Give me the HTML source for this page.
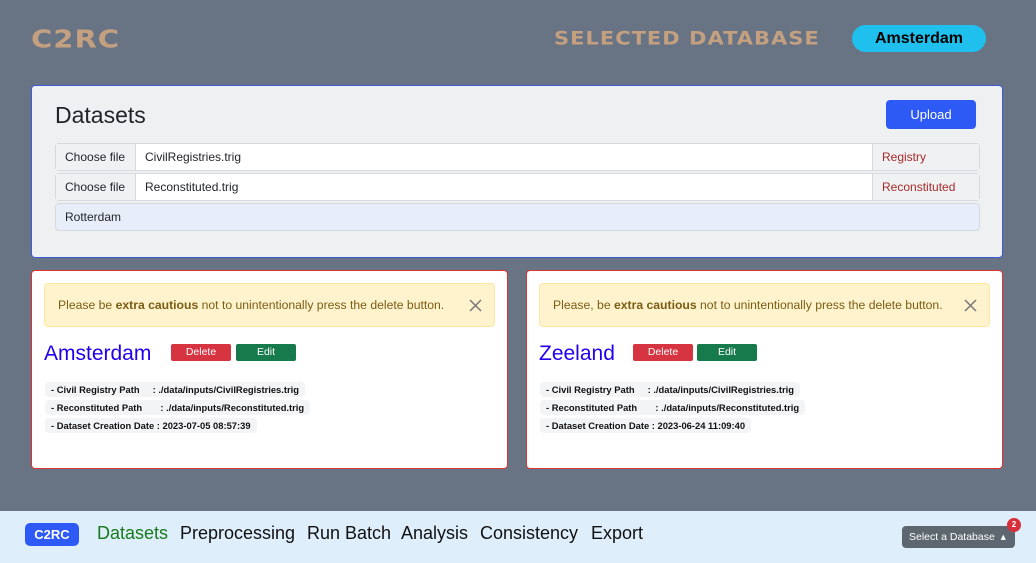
<!DOCTYPE html>
<html><head><style>
*{box-sizing:border-box;margin:0;padding:0}
body{width:1036px;height:563px;background:#687484;font-family:"Liberation Sans",sans-serif;position:relative;overflow:hidden}
.abs{position:absolute}
.logo{left:31px;top:22px;font-size:29px;font-weight:bold;color:#c4a080;letter-spacing:1px;transform:scaleY(0.85);font-family:"DejaVu Sans",sans-serif}
.sel{left:554px;top:26px;font-size:21px;font-weight:bold;color:#c4a080;letter-spacing:1px;font-family:"DejaVu Sans",sans-serif;transform:scaleY(0.9);transform-origin:left}
.pill{left:852px;top:25px;width:134px;height:27px;border-radius:14px;background:#1fc0ee;text-align:center;line-height:27px;font-weight:bold;font-size:16px;color:#000}
.ds{left:31px;top:85px;width:972px;height:173px;background:#eff0f2;border:1px solid #3d5bd9;border-radius:4px}
.ds h1{position:absolute;left:23px;top:16px;font-size:23px;font-weight:normal;color:#212529}
.up{position:absolute;left:854px;top:14px;width:90px;height:29px;background:#2d5af5;color:#fff;border-radius:4px;text-align:center;line-height:29px;font-size:13px}
.row{position:absolute;left:23px;width:925px;height:28px;border:1px solid #d6d9dd;border-radius:4px;background:#fff;font-size:12px;color:#212529}
.row .c{position:absolute;left:0;top:0;width:80px;height:26px;background:#f0f1f3;border-right:1px solid #d6d9dd;line-height:26px;padding-left:9px}
.row .f{position:absolute;left:89px;line-height:26px}
.row .t{position:absolute;right:0;top:0;width:107px;height:26px;background:#f0f1f3;border-left:1px solid #d6d9dd;line-height:26px;padding-left:9px;color:#a52a2a}
.card{top:270px;width:477px;height:199px;background:#fff;border:1px solid #d33;border-radius:4px}
.al{position:absolute;left:12px;top:12px;width:451px;height:44px;background:#fff3cd;border:1px solid #ffe69c;border-radius:4px;color:#7a5c12;font-size:12.2px;line-height:42px;padding-left:13px}
.al svg{position:absolute;right:12px;top:15px}
.nm{position:absolute;left:12px;top:71px;font-size:21px;color:#2200ee}
.b{position:absolute;top:73px;width:60px;height:17px;border-radius:2px;color:#fff;font-size:10.5px;text-align:center;line-height:17px}
.inf{position:absolute;left:13px;height:15px;background:#f3f4f6;border-radius:4px;font-size:9.4px;font-weight:bold;line-height:15px;padding:0 6px;color:#111;white-space:pre}
.nav{left:0;top:511px;width:1036px;height:52px;background:#deeefb}
.nb{position:absolute;left:25px;top:12px;width:54px;height:23px;background:#2d5af5;color:#fff;border-radius:5px;font-weight:bold;font-size:13px;text-align:center;line-height:23px}
.nl{position:absolute;top:12px;font-size:18px;color:#111}
.sd{position:absolute;left:902px;top:15px;width:113px;height:22px;background:#5e6770;color:#fff;border-radius:4px;font-size:10.5px;line-height:22px;padding-left:7px}
.bd{position:absolute;left:1007px;top:7px;width:14px;height:14px;border-radius:7px;background:#d8303a;color:#fff;font-size:8px;font-weight:bold;text-align:center;line-height:14px}
</style></head><body>
<div class="abs logo">C2RC</div>
<div class="abs sel">SELECTED DATABASE</div>
<div class="abs pill">Amsterdam</div>
<div class="abs ds">
<h1>Datasets</h1><div class="up">Upload</div>
<div class="row" style="top:57px"><div class="c">Choose file</div><div class="f">CivilRegistries.trig</div><div class="t">Registry</div></div>
<div class="row" style="top:87px"><div class="c">Choose file</div><div class="f">Reconstituted.trig</div><div class="t">Reconstituted</div></div>
<div class="row" style="top:117px;background:#e8eef9;"><div class="f" style="left:9px">Rotterdam</div></div>
</div>
<div class="abs card" style="left:31px">
<div class="al">Please be <b>extra cautious</b> not to unintentionally press the delete button.<svg width="13" height="13" viewBox="0 0 13 13"><path d="M1 1L12 12M12 1L1 12" stroke="#777" stroke-width="1.5"/></svg></div>
<div class="nm">Amsterdam</div>
<div class="b" style="left:139px;background:#d63440">Delete</div><div class="b" style="left:204px;background:#177a4c">Edit</div>
<div class="inf" style="top:111px">- Civil Registry Path     : ./data/inputs/CivilRegistries.trig</div>
<div class="inf" style="top:129px">- Reconstituted Path       : ./data/inputs/Reconstituted.trig</div>
<div class="inf" style="top:147px">- Dataset Creation Date : 2023-07-05 08:57:39</div>
</div>
<div class="abs card" style="left:526px">
<div class="al">Please, be <b>extra cautious</b> not to unintentionally press the delete button.<svg width="13" height="13" viewBox="0 0 13 13"><path d="M1 1L12 12M12 1L1 12" stroke="#777" stroke-width="1.5"/></svg></div>
<div class="nm">Zeeland</div>
<div class="b" style="left:106px;background:#d63440">Delete</div><div class="b" style="left:170px;background:#177a4c">Edit</div>
<div class="inf" style="top:111px">- Civil Registry Path     : ./data/inputs/CivilRegistries.trig</div>
<div class="inf" style="top:129px">- Reconstituted Path       : ./data/inputs/Reconstituted.trig</div>
<div class="inf" style="top:147px">- Dataset Creation Date : 2023-06-24 11:09:40</div>
</div>
<div class="abs nav">
<div class="nb">C2RC</div>
<div class="nl" style="left:97px;color:#177a1c">Datasets</div>
<div class="nl" style="left:180px">Preprocessing</div>
<div class="nl" style="left:307px">Run Batch</div>
<div class="nl" style="left:401px">Analysis</div>
<div class="nl" style="left:480px">Consistency</div>
<div class="nl" style="left:591px">Export</div>
<div class="sd">Select a Database &nbsp;▴</div>
<div class="bd">2</div>
</div>
</body></html>
